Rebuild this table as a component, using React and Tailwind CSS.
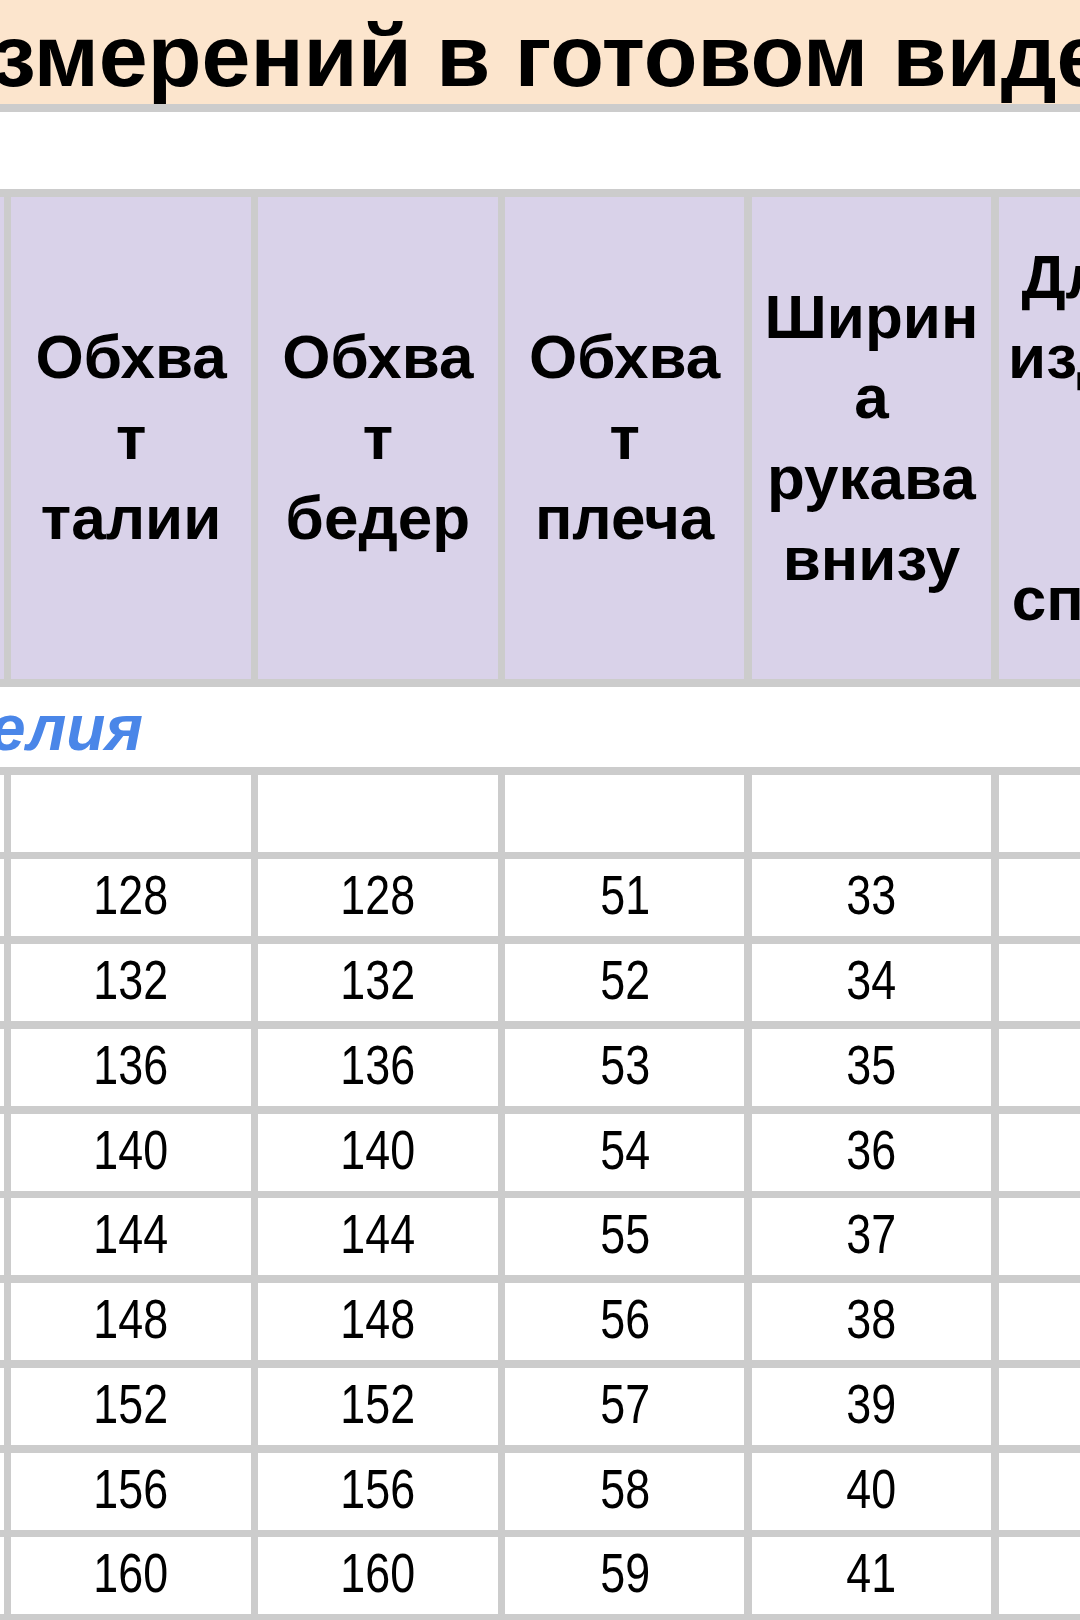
import React from "react";

const COLS = "grid grid-cols-[4px_239.4px_239.4px_239.4px_239.4px_239.4px] grid-rows-[100%] gap-x-[7.4px]";

const headers = [
  ["Обхва", "т", "талии"],
  ["Обхва", "т", "бедер"],
  ["Обхва", "т", "плеча"],
  ["Ширин", "а", "рукава", "внизу"],
  ["Длина", "издели", "я", "по", "спинке"],
];

const rows = [
  ["", "", "", "", ""],
  ["128", "128", "51", "33", ""],
  ["132", "132", "52", "34", ""],
  ["136", "136", "53", "35", ""],
  ["140", "140", "54", "36", ""],
  ["144", "144", "55", "37", ""],
  ["148", "148", "56", "38", ""],
  ["152", "152", "57", "39", ""],
  ["156", "156", "58", "40", ""],
  ["160", "160", "59", "41", ""],
];

export default function App() {
  return (
    <div className="w-[1080px] h-[1620px] overflow-hidden bg-white font-['Liberation_Sans',Arial,sans-serif] text-black">
      {/* Title band */}
      <div className="h-[112px] bg-[#fce5cd] border-b-[8px] border-[#cccccc] overflow-hidden whitespace-nowrap">
        <div className="ml-[-62px] pt-[11px] text-[88px] leading-[90px] font-bold">
          измерений в готовом виде
        </div>
      </div>

      {/* blank spacer row */}
      <div className="h-[77px] bg-white" />

      {/* Table */}
      <div className="flex flex-col gap-y-[7.75px] bg-[#cccccc] pt-[8px] pb-[10px]">
        {/* header */}
        <div className={`${COLS} h-[482px]`}>
          <div className="bg-[#d9d2e9]" />
          {headers.map((lines, i) => (
            <div
              key={i}
              className="bg-[#d9d2e9] flex flex-col items-center justify-center text-center font-bold text-[62px] leading-[80.6px] whitespace-nowrap overflow-hidden"
            >
              {lines.map((l, j) => (
                <span key={j}>{l}</span>
              ))}
            </div>
          ))}
        </div>

        {/* section title row */}
        <div className="h-[80px] bg-white overflow-hidden relative">
          <div className="w-[143px] flex justify-end pt-[3px] whitespace-nowrap">
            <span className="text-[64px] leading-[77px] font-bold italic text-[#4a86e8]">
              Параметры изделия
            </span>
          </div>
        </div>

        {/* data rows */}
        {rows.map((r, i) => (
          <div key={i} className={`${COLS} h-[77px]`}>
            <div className="bg-white" />
            {r.map((v, j) => (
              <div
                key={j}
                className="bg-white flex justify-center overflow-hidden text-[56px] leading-[71px] pb-[6px]"
              >
                <span className="inline-block scale-x-[0.8]">{v}</span>
              </div>
            ))}
          </div>
        ))}
      </div>
    </div>
  );
}
